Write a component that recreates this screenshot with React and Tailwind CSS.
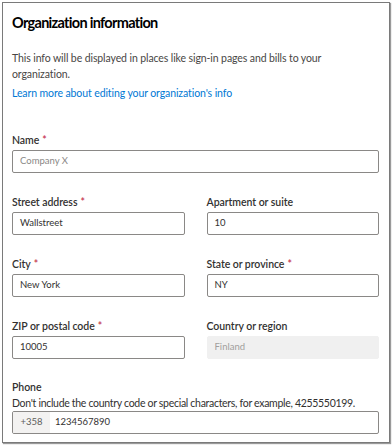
import React from "react";

const font = { fontFamily: 'Lato, "Open Sans", sans-serif' };

function Label({ children, required }) {
  return (
    <div className="text-[10.5px] tracking-[-0.05px] leading-[16px] text-[#323130] font-semibold mb-[2px]">
      {children}
      {required && <span className="text-[#c4314b] ml-[3px]">*</span>}
    </div>
  );
}

function Input({ value, placeholder, disabled }) {
  return (
    <div
      className={
        "h-[23px] rounded-[2px] border flex items-center px-[7px] text-[9.5px] " +
        (disabled
          ? "bg-[#f0f0f0] border-[#f0f0f0] text-[#a19f9d]"
          : "bg-white border-[#8a8886] " + (placeholder ? "text-[#8a8886]" : "text-[#323130]"))
      }
    >
      {value || placeholder}
    </div>
  );
}

export default function App() {
  return (
    <div className="w-[392px] h-[446px] bg-white p-[2px]" style={font}>
      <div className="w-[388px] h-[441px] border border-[#7a7a7a] shadow-[1px_1px_1px_#9a9a9a] pl-[9px] pr-[10px] pt-[8px]">
        <div className="text-[14.5px] tracking-[-0.7px] leading-[24px] font-bold text-[#000000]">
          Organization information
        </div>
        <div className="mt-[15px] text-[10.5px] tracking-[-0.1px] leading-[16px] text-[#484644]">
          This info will be displayed in places like sign-in pages and bills to your organization.
        </div>
        <div className="mt-[3px] text-[10.5px] tracking-[-0.1px] leading-[16px] text-[#0078d4]">
          Learn more about editing your organization's info
        </div>

        <div className="mt-[31px]">
          <Label required>Name</Label>
          <Input placeholder="Company X" />
        </div>

        <div className="mt-[21px] grid grid-cols-2 gap-x-[22px]">
          <div>
            <Label required>Street address</Label>
            <Input value="Wallstreet" />
          </div>
          <div>
            <Label>Apartment or suite</Label>
            <Input value="10" />
          </div>
        </div>

        <div className="mt-[21px] grid grid-cols-2 gap-x-[22px]">
          <div>
            <Label required>City</Label>
            <Input value="New York" />
          </div>
          <div>
            <Label required>State or province</Label>
            <Input value="NY" />
          </div>
        </div>

        <div className="mt-[21px] grid grid-cols-2 gap-x-[22px]">
          <div>
            <Label required>ZIP or postal code</Label>
            <Input value="10005" />
          </div>
          <div>
            <Label>Country or region</Label>
            <Input value="Finland" disabled />
          </div>
        </div>

        <div className="mt-[20px]">
          <div className="text-[10.5px] tracking-[-0.05px] leading-[16px] text-[#323130] font-semibold">Phone</div>
          <div className="text-[10.5px] tracking-[-0.3px] leading-[16px] text-[#323130]">
            Don't include the country code or special characters, for example, 4255550199.
          </div>
          <div className="h-[23px] rounded-[2px] border border-[#8a8886] flex items-stretch text-[9.5px] text-[#323130] overflow-hidden">
            <div className="bg-[#f3f2f1] text-[#605e5c] flex items-center justify-center w-[37px]">+358</div>
            <div className="flex items-center px-[5px]">1234567890</div>
          </div>
        </div>
      </div>
    </div>
  );
}
